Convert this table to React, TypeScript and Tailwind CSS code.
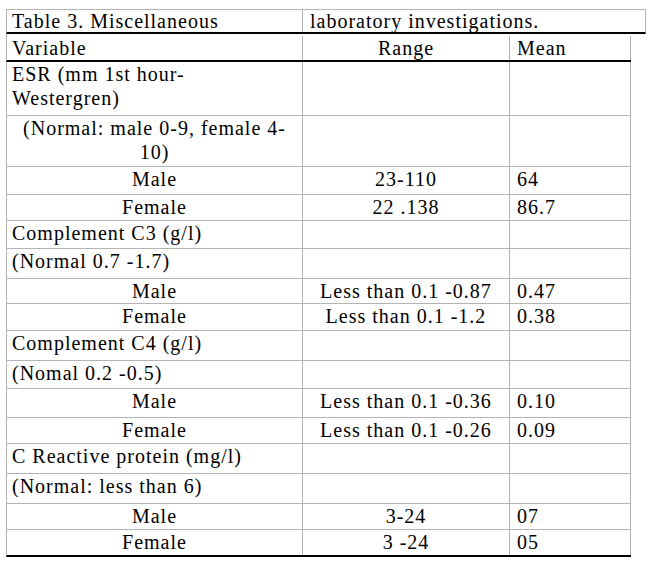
import React from "react";

type Row = {
  label: React.ReactNode;
  center?: boolean;
  range?: string;
  mean?: string;
  h: string;
};

const rows: Row[] = [
  { label: <>ESR (mm 1st hour-<br />Westergren)</>, h: "h-[54px]" },
  { label: <>(Normal: male 0-9, female 4-<br />10)</>, center: true, h: "h-[51px]" },
  { label: "Male", center: true, range: "23-110", mean: "64", h: "h-[28px]" },
  { label: "Female", center: true, range: "22 .138", mean: "86.7", h: "h-[26px]" },
  { label: "Complement C3 (g/l)", h: "h-[28px]" },
  { label: "(Normal 0.7 -1.7)", h: "h-[30px]" },
  { label: "Male", center: true, range: "Less than 0.1 -0.87", mean: "0.47", h: "h-[25px]" },
  { label: "Female", center: true, range: "Less than 0.1 -1.2", mean: "0.38", h: "h-[27px]" },
  { label: "Complement C4 (g/l)", h: "h-[30px]" },
  { label: "(Nomal 0.2 -0.5)", h: "h-[28px]" },
  { label: "Male", center: true, range: "Less than 0.1 -0.36", mean: "0.10", h: "h-[29px]" },
  { label: "Female", center: true, range: "Less than 0.1 -0.26", mean: "0.09", h: "h-[26px]" },
  { label: "C Reactive protein (mg/l)", h: "h-[30px]" },
  { label: "(Normal: less than 6)", h: "h-[30px]" },
  { label: "Male", center: true, range: "3-24", mean: "07", h: "h-[26px]" },
  { label: "Female", center: true, range: "3 -24", mean: "05", h: "h-[27px]" },
];

export default function App() {
  return (
    <div className="min-h-[567px] w-[650px] bg-white pt-[9px] pl-[6px] font-[family-name:Liberation_Serif,serif] text-[20px] leading-[24px] tracking-[1px] text-black">
      <div className="flex h-[25px] w-[640px] border-t border-l border-r border-[#b4b4b4] border-b-2 border-b-black leading-[22px]">
        <div className="w-[296px] border-r border-[#b4b4b4] pl-[5px]">Table 3. Miscellaneous</div>
        <div className="flex-1 pl-[7px]">laboratory investigations.</div>
      </div>
      <div className="w-[625px]">
        <div className="grid h-[28px] grid-cols-[296px_207px_121px] border-l border-[#b4b4b4] border-b-2 border-b-black pt-[2px]">
          <div className="border-r border-[#b4b4b4] pl-[5px]">Variable</div>
          <div className="border-r border-[#b4b4b4] text-center">Range</div>
          <div className="border-r border-[#b4b4b4] pl-[7px]">Mean</div>
        </div>
        {rows.map((r, i) => (
          <div
            key={i}
            className={`grid grid-cols-[296px_207px_121px] border-l border-[#b4b4b4] ${r.h} ${
              i === rows.length - 1 ? "border-b-2 border-b-black" : "border-b"
            }`}
          >
            <div className={`border-r border-[#b4b4b4] ${r.center ? "text-center" : "pl-[5px]"}`}>{r.label}</div>
            <div className="border-r border-[#b4b4b4] text-center whitespace-nowrap">{r.range ?? ""}</div>
            <div className="border-r border-[#b4b4b4] pl-[7px]">{r.mean ?? ""}</div>
          </div>
        ))}
      </div>
    </div>
  );
}
